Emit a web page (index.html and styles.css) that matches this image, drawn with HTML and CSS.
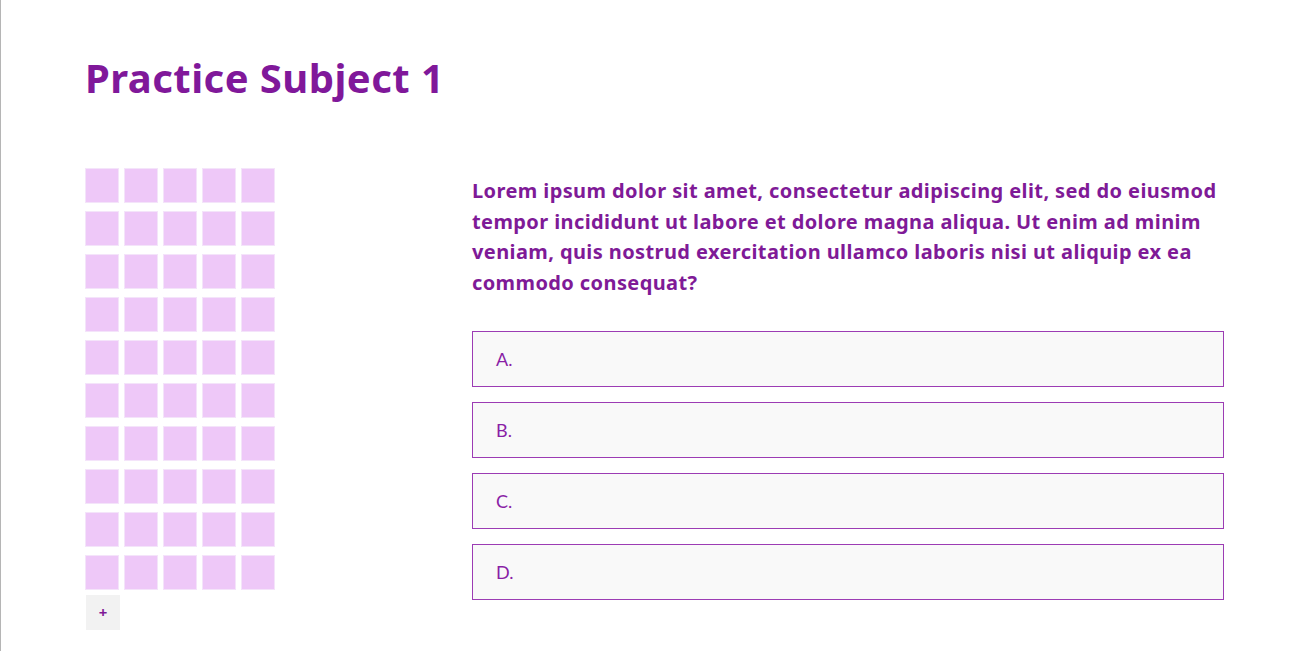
FILE: index.html
```html
<!DOCTYPE html>
<html lang="en">
<head>
<meta charset="utf-8">
<title>Practice Subject 1</title>
<link rel="stylesheet" href="styles.css">
</head>
<body>
<div class="page">
  <h1 class="title">Practice Subject 1</h1>
  <div class="main">
    <div class="palette">
      <div class="grid">
        <button class="cell"></button><button class="cell"></button><button class="cell"></button><button class="cell"></button><button class="cell"></button>
        <button class="cell"></button><button class="cell"></button><button class="cell"></button><button class="cell"></button><button class="cell"></button>
        <button class="cell"></button><button class="cell"></button><button class="cell"></button><button class="cell"></button><button class="cell"></button>
        <button class="cell"></button><button class="cell"></button><button class="cell"></button><button class="cell"></button><button class="cell"></button>
        <button class="cell"></button><button class="cell"></button><button class="cell"></button><button class="cell"></button><button class="cell"></button>
        <button class="cell"></button><button class="cell"></button><button class="cell"></button><button class="cell"></button><button class="cell"></button>
        <button class="cell"></button><button class="cell"></button><button class="cell"></button><button class="cell"></button><button class="cell"></button>
        <button class="cell"></button><button class="cell"></button><button class="cell"></button><button class="cell"></button><button class="cell"></button>
        <button class="cell"></button><button class="cell"></button><button class="cell"></button><button class="cell"></button><button class="cell"></button>
        <button class="cell"></button><button class="cell"></button><button class="cell"></button><button class="cell"></button><button class="cell"></button>
      </div>
      <button class="add">+</button>
    </div>
    <div class="question">
      <p class="stem">Lorem ipsum dolor sit amet, consectetur adipiscing elit, sed do eiusmod tempor incididunt ut labore et dolore magna aliqua. Ut enim ad minim veniam, quis nostrud exercitation ullamco laboris nisi ut aliquip ex ea commodo consequat?</p>
      <div class="options">
        <div class="option">A.</div>
        <div class="option">B.</div>
        <div class="option">C.</div>
        <div class="option">D.</div>
      </div>
    </div>
  </div>
</div>
</body>
</html>
```
FILE: styles.css
```css
html, body {
  margin: 0;
  padding: 0;
  background: #ffffff;
}

.page {
  box-sizing: border-box;
  min-height: 651px;
  border-left: 1px solid #b5b5b5;
  padding: 0 0 0 84px;
  font-family: "Noto Sans", "Liberation Sans", sans-serif;
  color: #7f1a97;
}

.title {
  margin: 0;
  padding-top: 52px;
  font-size: 40px;
  line-height: 52px;
  font-weight: 700;
  letter-spacing: 0.45px;
  color: #80189a;
}

.main {
  display: flex;
  margin-top: 64px;
}

.palette {
  width: 387px;
  flex: none;
  display: flex;
  flex-direction: column;
  gap: 5px;
}

.grid {
  display: grid;
  grid-template-columns: repeat(5, 34px);
  column-gap: 5px;
  row-gap: 8px;
}

.cell {
  box-sizing: border-box;
  width: 34px;
  height: 35px;
  margin: 0;
  padding: 0;
  background: #eec8f8;
  border: 1px solid #f4e4fa;
  cursor: pointer;
}

.add {
  box-sizing: border-box;
  width: 34px;
  height: 35px;
  margin: 0 0 0 1px;
  padding: 0;
  border: 0;
  background: #f2f2f2;
  color: #7f1a97;
  font-family: "Noto Sans", sans-serif;
  font-size: 15px;
  font-weight: 700;
  line-height: 35px;
}

.question {
  width: 752px;
  flex: none;
}

.stem {
  margin: 8px 0 0 0;
  font-size: 20px;
  line-height: 30.5px;
  font-weight: 700;
  letter-spacing: 0.4px;
  color: #7f1a97;
}

.options {
  display: flex;
  flex-direction: column;
  gap: 15px;
  margin-top: 33px;
}

.option {
  box-sizing: border-box;
  height: 56px;
  border: 1px solid #9c3cb4;
  background: #f9f9f9;
  padding: 0 23px;
  display: flex;
  align-items: center;
  font-family: "Lato", sans-serif;
  font-size: 18px;
  color: #8a1fa6;
}
```
